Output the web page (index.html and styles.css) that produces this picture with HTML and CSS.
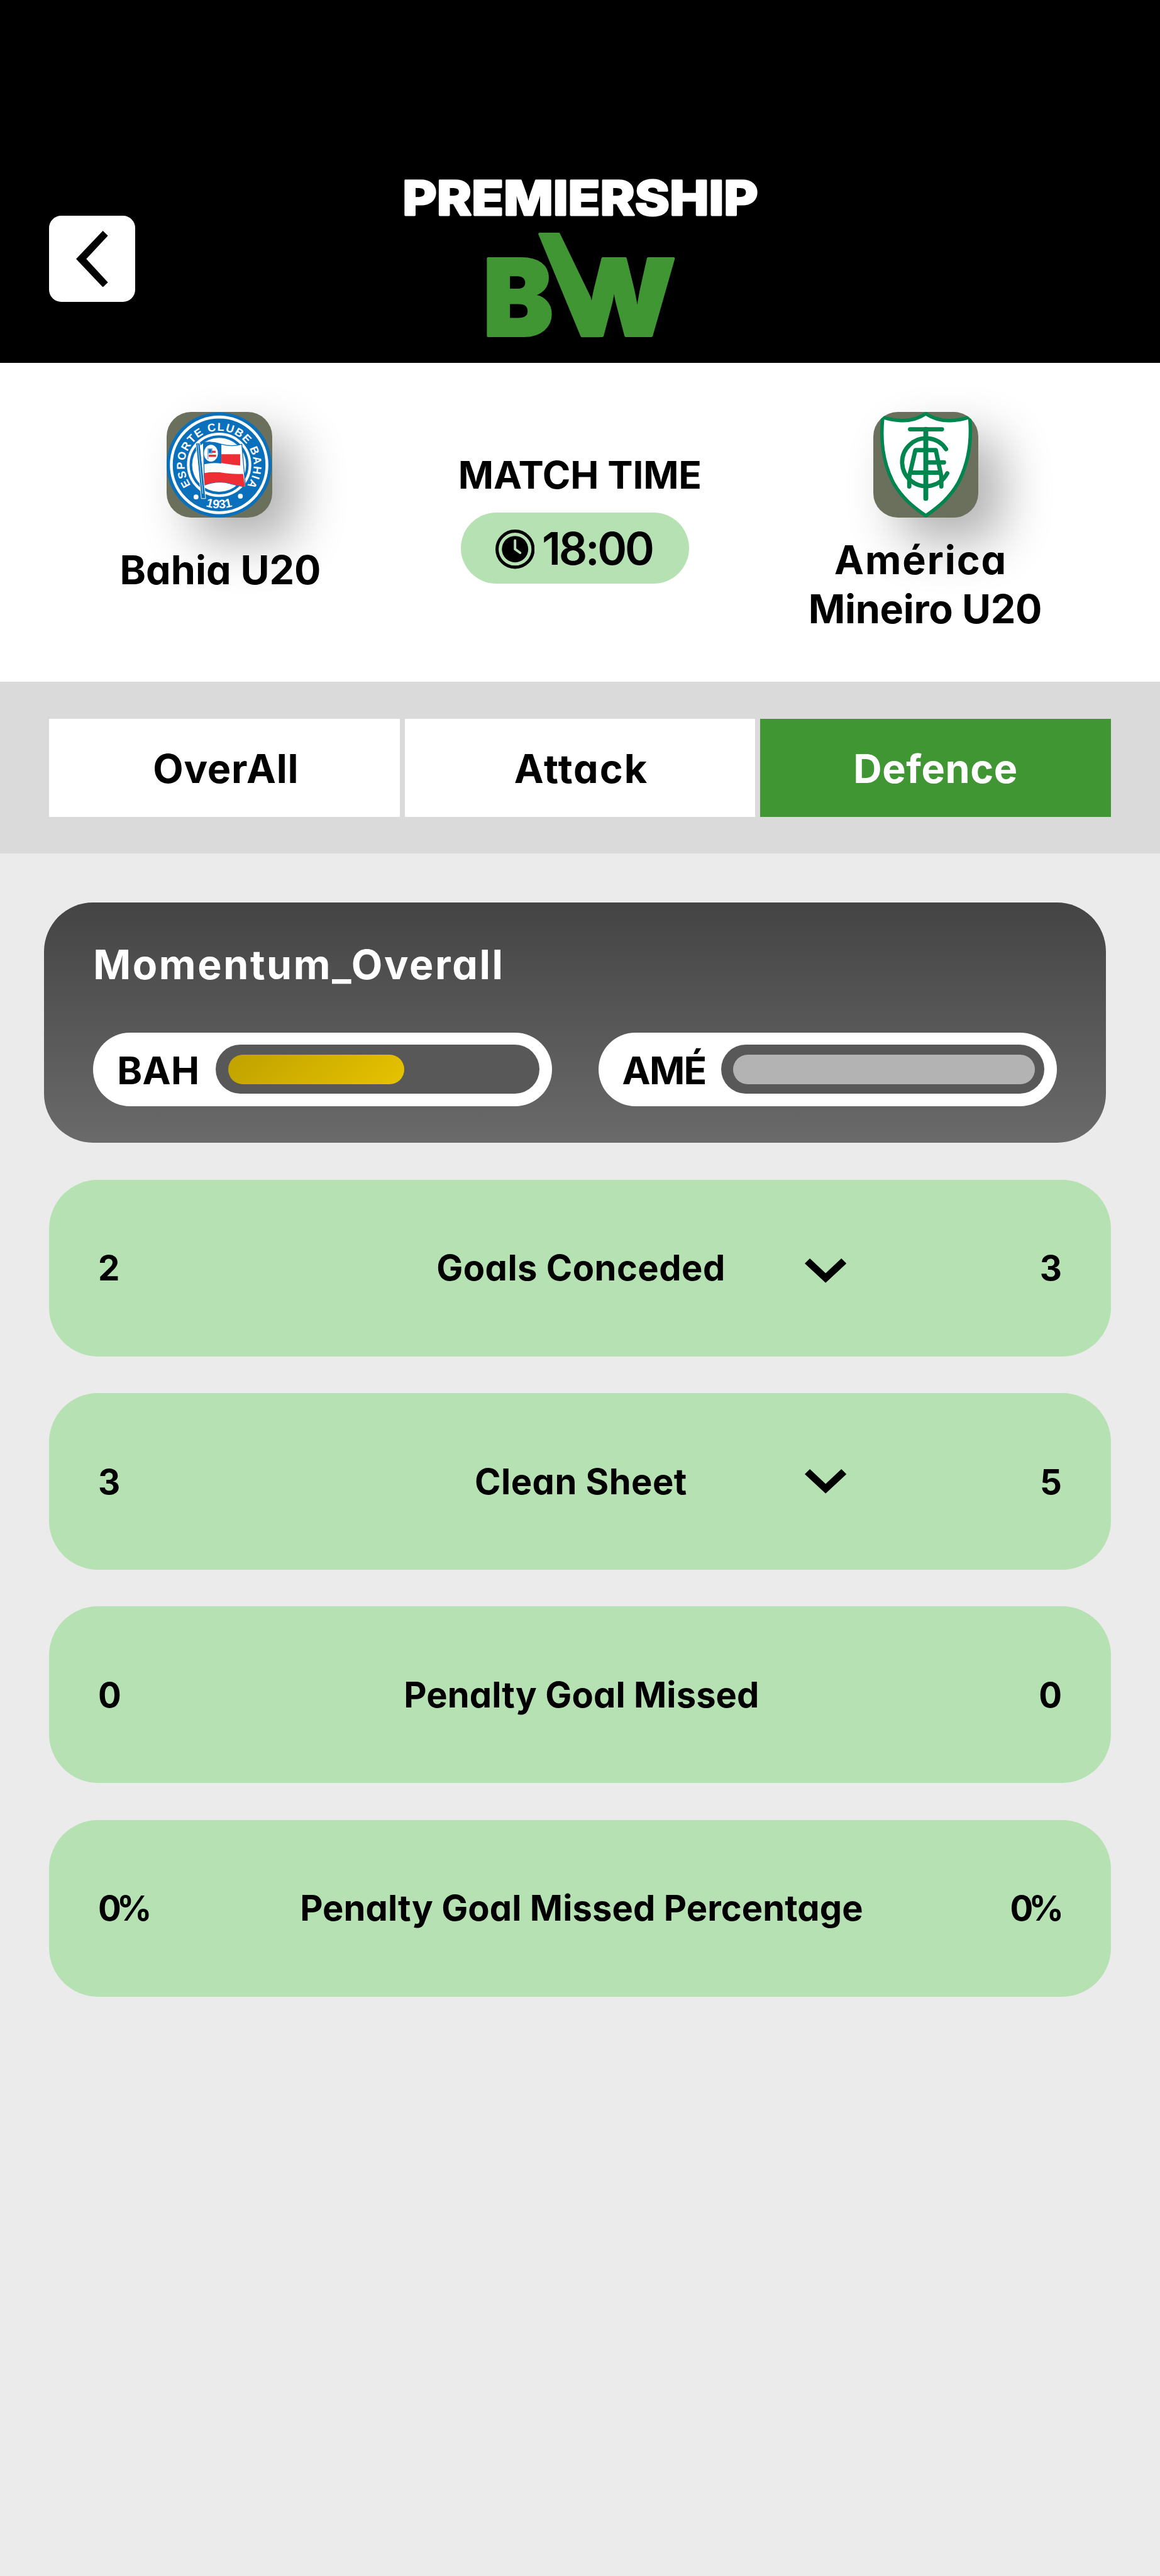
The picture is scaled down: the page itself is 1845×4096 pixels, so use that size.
FILE: index.html
```html
<!DOCTYPE html>
<html lang="en">
<head>
<meta charset="utf-8">
<title>Premiership BW - Defence</title>
<link rel="stylesheet" href="styles.css">
</head>
<body>
<header class="header">
  <button class="back" aria-label="Back">
    <svg class="back-icon" viewBox="0 0 52 92"><path d="M43.7 0 52 8 16.7 46 52 84 43.7 92 0 46Z"/></svg>
  </button>
  <svg class="logo" viewBox="0 0 600 280" role="img" aria-label="Premiership BW">
    <defs>
      <clipPath id="w-clip"><path d="M316.2 90H600V280H306L316.2 202Z"/></clipPath>
    </defs>
    <text class="logo-name" x="10.500" y="68.500" textLength="580" lengthAdjust="spacingAndGlyphs">PREMIERSHIP</text>
    <g class="logo-mark">
      <text x="142" y="266" textLength="114" lengthAdjust="spacingAndGlyphs">B</text>
      <g clip-path="url(#w-clip)"><text x="254.5" y="266" textLength="202.5" lengthAdjust="spacingAndGlyphs">W</text></g>
      <path d="M234 99.500H265.500L315.500 203L331.500 266H303Z"/>
    </g>
  </svg>
</header>

<section class="match">
  <div class="team">
    <div class="badge">
      <svg viewBox="0 0 516 516">
        <defs>
          <path id="ring-top" d="M118.500 357.700A169 169 0 1 1 395.500 357.700"/>
          <path id="ring-bottom" d="M140 437A213 213 0 0 0 374 437"/>
        </defs>
        <circle cx="257" cy="259" r="257" fill="#0a70bc"/>
        <circle cx="257" cy="259" r="234" fill="none" stroke="#fff" stroke-width="14"/>
        <circle cx="257" cy="259" r="151" fill="none" stroke="#fff" stroke-width="13"/>
        <circle cx="257" cy="259" r="132" fill="#fff"/>
        <text class="ring-text"><textPath href="#ring-top" textLength="740">ESPORTE CLUBE BAHIA</textPath></text>
        <text class="ring-year"><textPath href="#ring-bottom" startOffset="50%" text-anchor="middle">1931</textPath></text>
        <circle cx="144" cy="416" r="12" fill="#fff"/>
        <circle cx="361" cy="412" r="12" fill="#fff"/>
        <path d="M180 150Q225 142 268 158Q320 172 368 158L386 368Q330 356 288 345Q235 338 185 358Z" fill="#fff" stroke="#0a70bc" stroke-width="4"/>
        <path d="M180 150Q225 142 268 158V252Q225 246 184 256Z" fill="#0a70bc"/>
        <path d="M268 207H360V262Q315 258 268 250Z" fill="#ee2e34"/>
        <path d="M184 299Q235 290 285 299Q330 305 374 303L384 366Q330 356 288 345Q235 338 185 358Z" fill="#ee2e34"/>
        <ellipse cx="217" cy="202" rx="34" ry="41" fill="#fff"/>
        <path d="M204 180H222V202H204ZM202 180V230" fill="#0a70bc" stroke="#7fb4dc" stroke-width="5"/>
        <path d="M222 190H240V200H222ZM206 209H242V220H206Z" fill="#ee2e34"/>
        <path d="M143 152H163L191 424H170Z" fill="#0a70bc" stroke="#fff" stroke-width="3"/>
        <path d="M153 156 177 400" stroke="#fff" stroke-width="2.500"/>
      </svg>
    </div>
    <div class="team-name team-name--single"><span class="n-bahia">Bahia U20</span></div>
  </div>

  <div class="kickoff">
    <div class="kickoff-label">MATCH TIME</div>
    <div class="kickoff-pill">
      <svg class="clock" viewBox="0 0 64 64">
        <circle cx="32" cy="32" r="29.400" fill="none" stroke="#000" stroke-width="5.200"/>
        <circle cx="32" cy="32" r="21.500"/>
        <path d="M32 18V32L40.300 38" fill="none" stroke="#b6e1b2" stroke-width="4" stroke-linecap="round" stroke-linejoin="round"/>
      </svg>
      <span class="kickoff-time">18:00</span>
    </div>
  </div>

  <div class="team">
    <div class="badge">
      <svg viewBox="0 0 516 516">
        <path d="M257 9C215 36 170 44 135 42C105 41 75 36 46 26C36 130 42 240 100 350C140 420 195 465 257 508C319 465 374 420 414 350C472 240 482 130 472 26C439 36 409 41 379 42C344 44 299 36 257 9Z" fill="#fff" stroke="#00854f" stroke-width="17"/>
        <g fill="none" stroke="#00854f" stroke-width="21" stroke-linecap="round" stroke-linejoin="round">
          <path d="M180 85H336"/>
          <path d="M257 85V423" stroke-width="24"/>
          <path d="M356 182A117 117 0 1 0 362 300"/>
          <path d="M176 365V315L206 187H306L333 315V365M180 297H325M257 247H346"/>
        </g>
      </svg>
    </div>
    <div class="team-name team-name--double"><span class="n-america">América</span><span class="n-mineiro">Mineiro U20</span></div>
  </div>
</section>

<nav class="tabs">
  <button class="tab">OverAll</button>
  <button class="tab tab--wide">Attack</button>
  <button class="tab tab--active">Defence</button>
</nav>

<main class="content">
  <section class="momentum">
    <h2 class="momentum-title">Momentum_Overall</h2>
    <div class="meters">
      <div class="meter">
        <span class="meter-code">BAH</span>
        <div class="track"><div class="fill fill--gold" style="width:58.5%"></div></div>
      </div>
      <div class="meter">
        <span class="meter-code meter-code--tight">AMÉ</span>
        <div class="track"><div class="fill fill--grey" style="width:100%"></div></div>
      </div>
    </div>
  </section>

  <div class="stats">
    <div class="stat">
      <span class="value">2</span>
      <span class="label">Goals Conceded</span>
      <span class="end"><svg class="chevron chevron--low" viewBox="0 0 68 40"><path d="M8.300 0 34 24 59.700 0 68 8.300 34 39.700 0 8.300Z"/></svg><span class="value">3</span></span>
    </div>
    <div class="stat">
      <span class="value">3</span>
      <span class="label">Clean Sheet</span>
      <span class="end"><svg class="chevron" viewBox="0 0 68 40"><path d="M8.300 0 34 24 59.700 0 68 8.300 34 39.700 0 8.300Z"/></svg><span class="value">5</span></span>
    </div>
    <div class="stat stat--plain">
      <span class="value">0</span>
      <span class="label label--snug">Penalty Goal Missed</span>
      <span class="end"><span class="value">0</span></span>
    </div>
    <div class="stat stat--plain">
      <span class="value value--percent">0%</span>
      <span class="label label--snug">Penalty Goal Missed Percentage</span>
      <span class="end"><span class="value value--percent">0%</span></span>
    </div>
  </div>
</main>
</body>
</html>
```
FILE: styles.css
```css
* { box-sizing: border-box; }

html { font-size: 9.75px; }

body {
  margin: 0;
  min-height: 420rem;
  background: #ebebeb;
  color: #000;
  font-family: "Inter", "Liberation Sans", sans-serif;
  font-weight: 660;
  font-size: 6.45rem;
  line-height: 8rem;
  font-feature-settings: "cv11";
  white-space: nowrap;
}

button {
  border: 0;
  padding: 0;
  font: inherit;
  font-feature-settings: inherit;
  color: inherit;
}

svg { display: block; }

/* Header */
.header {
  display: grid;
  grid-template-columns: 14rem 60rem 14rem;
  justify-content: space-between;
  align-items: start;
  height: 59.2rem;
  padding: 28.2rem 8rem 0;
  background: #000;
}

.back {
  display: flex;
  align-items: center;
  width: 14rem;
  height: 14rem;
  margin-top: 7rem;
  padding-left: 4.4rem;
  border-radius: 2rem;
  background: #fff;
}

.back-icon { width: 5.2rem; height: 9.2rem; }

.logo { width: 60rem; height: 28rem; overflow: visible; }

.logo text { font-weight: 900; }

.logo .logo-name {
  font-size: 78px;
  font-weight: 800;
  fill: #fff;
  stroke: #fff;
  stroke-width: 3px;
  stroke-linejoin: round;
}

.logo-mark {
  font-size: 173.7px;
  fill: #3f9633;
  stroke: #3f9633;
  stroke-width: 4px;
  stroke-linejoin: round;
}

/* Match summary */
.match {
  display: grid;
  grid-template-columns: 71.6rem 46rem 1fr;
  height: 52rem;
  padding-right: 4.8rem;
  background: #fff;
}

.team {
  display: flex;
  flex-direction: column;
  align-items: center;
  padding-top: 8rem;
}

.badge {
  width: 17.2rem;
  height: 17.2rem;
  border-radius: 4rem;
  background: #6b705c;
  box-shadow: 4rem 4rem 8rem rgba(0, 0, 0, .3);
}

.badge svg { width: 100%; height: 100%; border-radius: 4rem; overflow: hidden; }

.ring-text { font: 700 55px "Liberation Sans", sans-serif; fill: #fff; }
.ring-year { font: 700 60px "Liberation Sans", sans-serif; fill: #fff; }

.team-name { display: flex; flex-direction: column; align-items: center; }
.team-name--single { margin-top: 4.5rem; padding-left: .3rem; }
.team-name--double { margin-top: 2.9rem; }

.n-bahia { letter-spacing: 0; }
.n-america { margin-right: 1.6rem; letter-spacing: .2rem; }
.n-mineiro { margin-right: .2rem; letter-spacing: -.03rem; }

.kickoff {
  display: flex;
  flex-direction: column;
  align-items: center;
  padding-top: 14.2rem;
}

.kickoff-label { font-size: 6.2rem; letter-spacing: -.02rem; }

.kickoff-pill {
  display: flex;
  align-items: center;
  gap: 1.2rem;
  width: 37.2rem;
  height: 11.6rem;
  margin: 2.2rem 1.6rem 0 0;
  padding-left: 5.6rem;
  border-radius: 5.8rem;
  background: #b6e1b2;
}

.clock { width: 6.4rem; height: 6.4rem; margin-top: .4rem; }

.kickoff-time { font-size: 7.3rem; font-weight: 620; letter-spacing: -.34rem; }

/* Tabs */
.tabs {
  display: grid;
  grid-template-columns: repeat(3, 1fr);
  gap: .8rem;
  height: 28rem;
  padding: 6rem 8rem;
  background: #dadada;
}

.tab { padding: .2rem 0 0 .5rem; background: #fff; letter-spacing: .08rem; }
.tab--wide { padding-left: .4rem; letter-spacing: .2rem; }
.tab--active { padding-left: 0; background: #3f9633; color: #fff; letter-spacing: .06rem; }

/* Momentum */
.content { padding: 8rem 8rem 0; }

.momentum {
  height: 39.2rem;
  margin: 0 .8rem 0 -.8rem;
  padding: 6.1rem 8rem 0;
  border-radius: 8rem;
  background: linear-gradient(#444, #6a6a6a);
}

.momentum-title {
  margin: 0;
  color: #fff;
  font-size: 6.6rem;
  font-weight: 650;
  line-height: 8rem;
  letter-spacing: .27rem;
}

.meters { display: flex; gap: 7.6rem; margin-top: 7.1rem; }

.meter {
  display: flex;
  justify-content: space-between;
  align-items: center;
  width: 74.8rem;
  height: 12rem;
  padding: 0 2rem 0 3.9rem;
  border-radius: 6rem;
  background: #fff;
}

.meter-code { padding-top: .3rem; font-size: 6.2rem; letter-spacing: .04rem; }
.meter-code--tight { letter-spacing: -.18rem; }

.track {
  width: 52.8rem;
  height: 8rem;
  padding: 1.6rem 1.6rem 1.6rem 2rem;
  border-radius: 4rem;
  background: #585858;
}

.fill { height: 4.8rem; border-radius: 2.4rem; }
.fill--gold { background: linear-gradient(135deg, #c0a200, #e6c200); }
.fill--grey { background: #b3b3b3; }

/* Stat rows */
.stats { display: grid; gap: 6rem; margin-top: 6rem; }

.stat {
  display: grid;
  grid-template-columns: 42rem 1fr 42rem;
  align-items: center;
  height: 28.8rem;
  padding: 0 8rem;
  border-radius: 8rem;
  background: #b6e1b2;
}

.stat--plain { grid-template-columns: 26rem 1fr 26rem; }

.label {
  padding-left: .3rem;
  text-align: center;
  font-size: 5.75rem;
  letter-spacing: .05rem;
}

.label--snug { padding-left: .5rem; letter-spacing: .01rem; }

.value { font-size: 5.6rem; }
.value--percent { letter-spacing: -.7rem; }

.end { display: flex; align-items: center; }
.end .value { margin-left: auto; }
.end .value--percent { margin-right: .4rem; }

.chevron { width: 6.8rem; height: 4rem; }
.chevron--low { margin-top: .8rem; }
```
